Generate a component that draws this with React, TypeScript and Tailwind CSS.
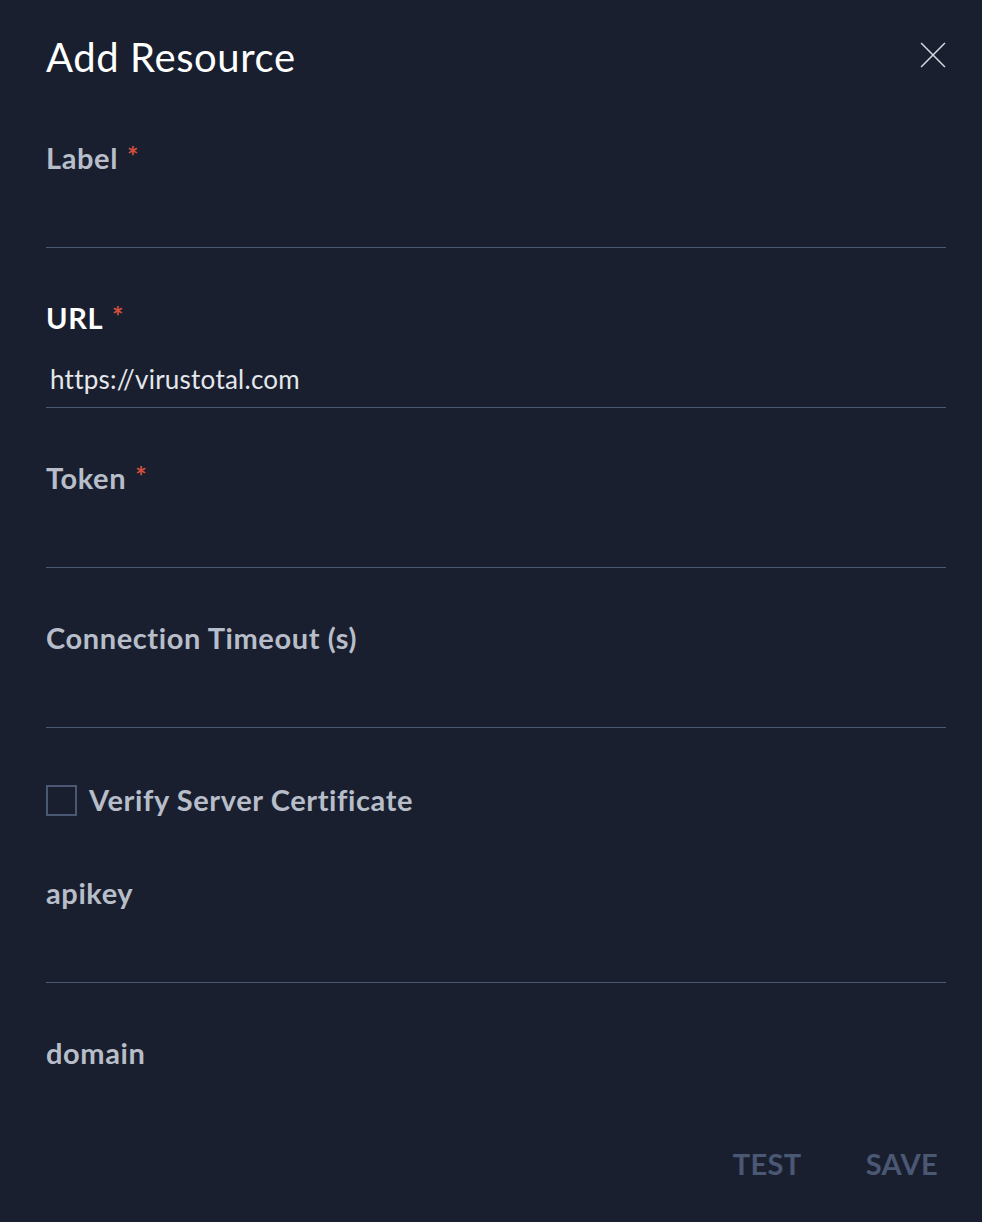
import React from 'react';

const font = { fontFamily: 'Lato, "Open Sans", sans-serif' };

type FieldProps = { label: string; required?: boolean; value?: string; active?: boolean };

function Field({ label, required, value, active }: FieldProps) {
    return (
        <div className="flex flex-col">
            <label className={`h-9 leading-9 text-[29px] tracking-[0.6px] font-bold flex items-center ${active ? 'text-white' : 'text-[#b7bec9]'}`}>
                {label}
                {required && <span className="ml-[9px] text-[27px] leading-none relative -top-[3px] text-[#d4503e]">*</span>}
            </label>
            <div className="mt-4 h-14 flex items-center border-b border-[#4b5873] pl-1 text-[26px] tracking-[0.25px] text-[#e4e7ec]">
                {value}
            </div>
        </div>
    );
}

function App() {
    return (
        <div className="h-screen w-full flex flex-col overflow-hidden bg-[#1a1f2f]" style={font}>
            <main className="flex-1 overflow-hidden px-[46px] pr-[36px]">
                {/* Header */}
                <header className="flex items-center justify-between pt-[33px] h-[81px]">
                    <h1 className="text-[40px] leading-[48px] tracking-[0.6px] text-white font-normal">Add Resource</h1>
                    <button className="w-[26px] h-[26px] -mt-[4px] text-[#d6dae0]">
                        <svg viewBox="0 0 24 24" width="26" height="26" fill="none" stroke="currentColor" strokeWidth="1.4">
                            <path d="M1 1 L23 23 M23 1 L1 23" />
                        </svg>
                    </button>
                </header>

                <div className="flex flex-col gap-[52px] mt-[59px] w-[900px]">
                    <Field label="Label" required />
                    <Field label="URL" required value="https://virustotal.com" active />
                    <Field label="Token" required />
                    <div className="flex flex-col">
                        <Field label="Connection Timeout (s)" />
                        <div className="mt-[54px] h-9 flex items-center gap-3">
                            <span className="w-[31px] h-[31px] border-2 border-[#4b5873]" />
                            <span className="text-[29px] tracking-[0.6px] font-bold text-[#b7bec9]">Verify Server Certificate</span>
                        </div>
                    </div>
                    <div className="mt-[5px]">
                        <Field label="apikey" />
                    </div>
                    <Field label="domain" />
                </div>
            </main>

            {/* Footer */}
            <footer className="h-[98px] flex justify-end items-start pt-[22px] pr-[44px] gap-16 bg-[#1a1f2f]">
                <button className="h-9 leading-9 text-[29px] tracking-[0.4px] font-bold text-[#4b5873]">TEST</button>
                <button className="h-9 leading-9 text-[29px] tracking-[0.4px] font-bold text-[#4b5873]">SAVE</button>
            </footer>
        </div>
    );
}

export default App;
